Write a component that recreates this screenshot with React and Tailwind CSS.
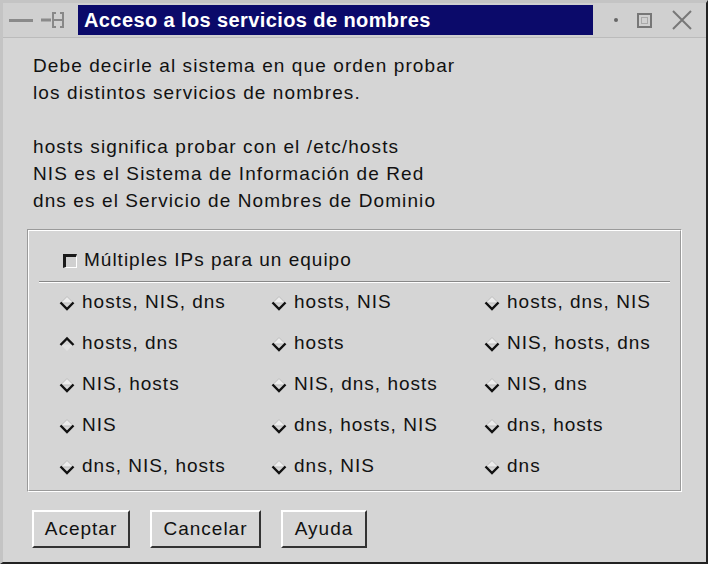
import React from 'react';

const options = [
  ['hosts, NIS, dns', 'hosts, NIS', 'hosts, dns, NIS'],
  ['hosts, dns', 'hosts', 'NIS, hosts, dns'],
  ['NIS, hosts', 'NIS, dns, hosts', 'NIS, dns'],
  ['NIS', 'dns, hosts, NIS', 'dns, hosts'],
  ['dns, NIS, hosts', 'dns, NIS', 'dns'],
];

function Radio({ checked }) {
  return (
    <svg width="16" height="16" viewBox="0 0 16 16" className="shrink-0">
      {checked ? (
        <>
          <path d="M8 15 L1.5 8.5 H14.5 Z" fill="#e2e2e2" />
          <path d="M1.5 9 L8 2.5 L14.5 9" fill="none" stroke="#111" strokeWidth="2.4" />
        </>
      ) : (
        <>
          <path d="M8 1.5 L1.5 8 H14.5 Z" fill="#ececec" stroke="#bdbdbd" strokeWidth="1" />
          <path d="M1.5 7.5 L8 14 L14.5 7.5" fill="none" stroke="#111" strokeWidth="2.4" />
        </>
      )}
    </svg>
  );
}

function Button({ children, w }) {
  return (
    <button
      className={`h-[38px] ${w} bg-[#d6d6d6] text-[19px] tracking-[1px] text-[#111] border-t-2 border-l-2 border-t-white border-l-white border-r-2 border-b-2 border-r-[#333] border-b-[#333]`}
    >
      {children}
    </button>
  );
}

export default function App() {
  return (
    <div
      className="w-[712px] h-[568px] bg-white overflow-hidden"
      style={{ fontFamily: '"Liberation Sans", Arial, sans-serif' }}
    >
      <div className="w-[708px] h-[564px] bg-[#d5d5d5] border-l-[3px] border-t-[3px] border-[#c4c4c4] border-r-2 border-b-2 border-r-[#222] border-b-[#222] flex flex-col">
        {/* title bar */}
        <div className="h-[35px] flex items-center bg-[#d0d0d0] border-b border-[#bbb]">
          <div className="flex items-center gap-[6px] pl-[6px] w-[75px]">
            <div className="w-[24px] h-[3px] bg-[#8a8a8a]" />
            <svg width="30" height="20" viewBox="0 0 30 20">
              <path d="M2 10 H12" stroke="#8a8a8a" strokeWidth="3" />
              <path d="M14 3 V17 M24 3 V17 M14 10 H24 M13 3 H17 M13 17 H17 M21 3 H25 M21 17 H25" stroke="#888" strokeWidth="2" fill="none" />
            </svg>
          </div>
          <div className="w-[515px] h-[30px] bg-[#0b0a6a] flex items-center pl-[6px] text-white font-bold text-[20px] tracking-[0.4px]">
            Acceso a los servicios de nombres
          </div>
          <div className="flex-1 flex items-center justify-around pl-[12px] pr-[4px]">
            <div className="w-[4px] h-[4px] bg-[#666] rounded-full" />
            <div className="w-[15px] h-[15px] border-2 border-[#777] flex items-center justify-center">
              <div className="w-[7px] h-[7px] border border-[#aaa]" />
            </div>
            <svg width="22" height="22" viewBox="0 0 22 22">
              <path d="M2 2 L20 20 M20 2 L2 20" stroke="#777" strokeWidth="2" />
            </svg>
          </div>
        </div>

        {/* description */}
        <div className="pl-[30px] pt-[14px] text-[19px] tracking-[1.1px] leading-[27px] text-[#111]">
          <p>Debe decirle al sistema en que orden probar</p>
          <p>los distintos servicios de nombres.</p>
          <p>&nbsp;</p>
          <p>hosts significa probar con el /etc/hosts</p>
          <p>NIS es el Sistema de Información de Red</p>
          <p>dns es el Servicio de Nombres de Dominio</p>
        </div>

        {/* group box */}
        <div className="mt-[15px] ml-[24px] w-[655px] h-[263px] border border-[#9a9a9a] border-r-white border-b-white">
          <div className="w-full h-full border border-white border-r-[#9a9a9a] border-b-[#9a9a9a] flex flex-col">
            <div className="h-[51px] pt-[9px] mx-[10px] flex items-center pl-[24px] gap-[7px] border-b border-[#888] shadow-[0_1px_0_#fff]">
              <div className="w-[14px] h-[14px] bg-[#d0d0d0] border-t-[3px] border-l-[3px] border-[#1a1a1a] border-r border-b border-r-white border-b-white" />
              <span className="text-[19px] tracking-[1px] text-[#111]">Múltiples IPs para un equipo</span>
            </div>
            <div className="grid grid-cols-[212px_213px_1fr] pl-[30px]">
              {options.map((row, ri) =>
                row.map((label, ci) => (
                  <div key={`${ri}-${ci}`} className="h-[41px] flex items-center gap-[7px] text-[19px] tracking-[1px] text-[#111]">
                    <Radio checked={ri === 1 && ci === 0} />
                    <span>{label}</span>
                  </div>
                ))
              )}
            </div>
          </div>
        </div>

        {/* buttons */}
        <div className="flex gap-[20px] pl-[29px] pt-[18px]">
          <Button w="w-[98px]">Aceptar</Button>
          <Button w="w-[111px]">Cancelar</Button>
          <Button w="w-[86px]">Ayuda</Button>
        </div>
      </div>
    </div>
  );
}
